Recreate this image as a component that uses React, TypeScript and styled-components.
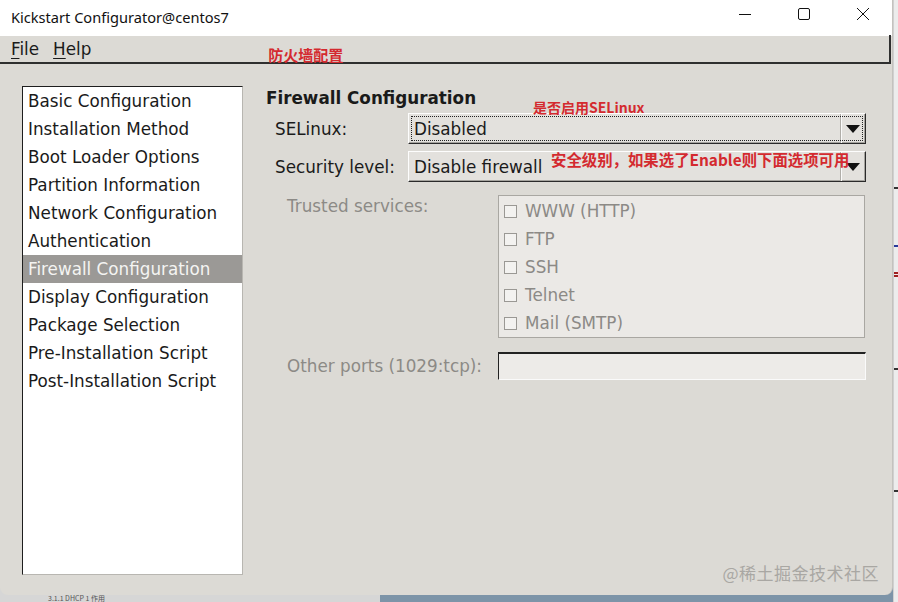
import React from "react"
import styled, { createGlobalStyle } from "styled-components"

const Color = {
    face: "#dcdad5",
    panel: "#ebe9e6",
    text: "#1a1a1a",
    muted: "#8c8a86",
    select: "#9b9996",
    note: "#d42a2f",
}

const sections = [
    "Basic Configuration",
    "Installation Method",
    "Boot Loader Options",
    "Partition Information",
    "Network Configuration",
    "Authentication",
    "Firewall Configuration",
    "Display Configuration",
    "Package Selection",
    "Pre-Installation Script",
    "Post-Installation Script",
]

const services = ["WWW (HTTP)", "FTP", "SSH", "Telnet", "Mail (SMTP)"]

const App: React.FC = () => (
    <>
        <GlobalStyle />
        <Desktop>
            <Window>
                <TitleBar>
                    <TitleText>Kickstart Configurator@centos7</TitleText>
                    <Controls>
                        <CtrlButton>
                            <svg width="14" height="14" viewBox="0 0 14 14">
                                <path d="M1 7.5h12" stroke="#111" strokeWidth="1" />
                            </svg>
                        </CtrlButton>
                        <CtrlButton>
                            <svg width="14" height="14" viewBox="0 0 14 14">
                                <rect x="1.5" y="1.5" width="11" height="11" rx="1.5" fill="none" stroke="#111" strokeWidth="1" />
                            </svg>
                        </CtrlButton>
                        <CtrlButton>
                            <svg width="14" height="14" viewBox="0 0 14 14">
                                <path d="M1 1l12 12M13 1L1 13" stroke="#111" strokeWidth="1" />
                            </svg>
                        </CtrlButton>
                    </Controls>
                </TitleBar>
                <MenuBar>
                    <MenuItem><u>F</u>ile</MenuItem>
                    <MenuItem><u>H</u>elp</MenuItem>
                    <Note $size={15}>防火墙配置</Note>
                </MenuBar>
                <Body>
                    <SectionList>
                        {sections.map((s) => (
                            <SectionItem key={s} $active={s === "Firewall Configuration"}>
                                {s}
                            </SectionItem>
                        ))}
                    </SectionList>
                    <Panel>
                        <Heading>Firewall Configuration</Heading>
                        <NoteLine $indent={267}>
                            <Note $size={14}>是否启用SELinux</Note>
                        </NoteLine>
                        <FormRow $top={4}>
                            <Label>SELinux:</Label>
                            <Combo $focused>
                                <ComboText>Disabled</ComboText>
                                <ComboArrow>
                                    <Triangle />
                                </ComboArrow>
                            </Combo>
                        </FormRow>
                        <FormRow $top={7}>
                            <Label>Security level:</Label>
                            <Combo>
                                <ComboText>Disable firewall</ComboText>
                                <ComboNote>安全级别，如果选了Enable则下面选项可用</ComboNote>
                                <ComboArrow>
                                    <Triangle />
                                </ComboArrow>
                            </Combo>
                        </FormRow>
                        <WideRow $top={13}>
                            <DimLabel $top>Trusted services:</DimLabel>
                            <ServiceBox>
                                {services.map((s) => (
                                    <ServiceItem key={s}>
                                        <CheckBox />
                                        {s}
                                    </ServiceItem>
                                ))}
                            </ServiceBox>
                        </WideRow>
                        <WideRow $top={14}>
                            <DimLabel>Other ports (1029:tcp):</DimLabel>
                            <Entry />
                        </WideRow>
                    </Panel>
                    <Watermark>@稀土掘金技术社区</Watermark>
                </Body>
            </Window>
            <SideStrip>
                <StripLine $top={187} $color="#333" />
                <StripLine $top={245} $color="#2a3a9a" />
                <StripLine $top={272} $color="#a02020" />
                <StripLine $top={275} $color="#a02020" />
                <StripLine $top={368} $color="#333" />
                <StripLine $top={490} $color="#333" />
            </SideStrip>
            <BottomStrip>
                <BottomLeft>3.1.1 DHCP 1 作用</BottomLeft>
                <BottomRight />
            </BottomStrip>
        </Desktop>
    </>
)

export default App

const GlobalStyle = createGlobalStyle`
    html, body {
        margin: 0;
        padding: 0;
        background: #e6e6e6;
    }
    body {
        font-family: "DejaVu Sans", sans-serif;
        overflow: hidden;
    }
`

const Desktop = styled.div`
    width: 898px;
    height: 602px;
    display: grid;
    grid-template-columns: 893px 5px;
    grid-template-rows: 595px 7px;
    background: #e8e8e8;
    overflow: hidden;
`

const Window = styled.div`
    grid-column: 1;
    grid-row: 1;
    display: flex;
    flex-direction: column;
    background: ${Color.face};
    border-radius: 0 0 8px 8px;
    border-right: 1px solid #c4c2be;
    overflow: hidden;
    position: relative;
    z-index: 1;
`

const TitleBar = styled.div`
    height: 36px;
    flex: none;
    background: #fff;
    display: flex;
    align-items: center;
    justify-content: space-between;
    padding-left: 11px;
`

const TitleText = styled.div`
    font-family: "Noto Sans", sans-serif;
    font-size: 14.6px;
    color: #111;
    margin-top: -3px;
`

const Controls = styled.div`
    display: flex;
    height: 100%;
`

const CtrlButton = styled.div`
    width: 59px;
    height: 100%;
    display: flex;
    align-items: center;
    justify-content: center;
    margin-top: -4px;
`

const MenuBar = styled.div`
    height: 26px;
    flex: none;
    display: flex;
    align-items: center;
    padding-left: 11px;
    padding-top: 1px;
    box-sizing: content-box;
    border-bottom: 2px solid #2f2f2f;
    border-right: 2px solid #2f2f2f;
    margin-right: 1px;
    margin-top: -1px;
`

const MenuItem = styled.span`
    font-size: 16.8px;
    color: ${Color.text};
    margin-right: 14px;
    u {
        text-underline-offset: 3px;
    }
`

const Note = styled.span<{ $size: number }>`
    font-family: "Noto Sans CJK SC", sans-serif;
    font-weight: 700;
    font-size: ${(p) => p.$size}px;
    color: ${Color.note};
    white-space: nowrap;
    ${MenuBar} & {
        margin-left: 163px;
        margin-top: 10px;
    }
`

const Body = styled.div`
    flex: 1;
    display: flex;
    gap: 23px;
    padding: 22px 0 20px 22px;
    position: relative;
`

const SectionList = styled.div`
    width: 219px;
    flex: none;
    background: #fff;
    border-top: 1px solid #1e1e1e;
    border-left: 1px solid #1e1e1e;
    border-right: 1px solid #b8b6b1;
    border-bottom: 1px solid #b8b6b1;
`

const SectionItem = styled.div<{ $active?: boolean }>`
    height: 28px;
    line-height: 28px;
    padding-left: 5px;
    font-size: 16.8px;
    white-space: nowrap;
    color: ${(p) => (p.$active ? "#f4f4f2" : Color.text)};
    background: ${(p) => (p.$active ? Color.select : "transparent")};
`

const Panel = styled.div`
    width: 600px;
    display: flex;
    flex-direction: column;
`

const Heading = styled.div`
    font-weight: 700;
    font-size: 16.8px;
    line-height: 22px;
    margin-top: 1px;
    color: ${Color.text};
`

const NoteLine = styled.div<{ $indent: number }>`
    height: 0;
    position: relative;
    z-index: 2;
    ${Note} {
        position: absolute;
        left: ${(p) => p.$indent}px;
        top: -12px;
        line-height: 20px;
    }
`

const FormRow = styled.div<{ $top: number }>`
    display: grid;
    grid-template-columns: 133px 458px;
    align-items: center;
    padding-left: 9px;
    margin-top: ${(p) => p.$top}px;
`

const Label = styled.div`
    font-size: 16.8px;
    color: ${Color.text};
`

const Combo = styled.div<{ $focused?: boolean }>`
    height: 31px;
    box-sizing: border-box;
    position: relative;
    display: flex;
    align-items: center;
    background: #e3e1dd;
    border-top: 1px solid #fdfdfd;
    border-left: 1px solid #fdfdfd;
    border-right: 1px solid #2a2a2a;
    border-bottom: 1px solid #2a2a2a;
    box-shadow: inset -1px -1px 0 #a5a39e;
    &::after {
        content: "";
        display: ${(p) => (p.$focused ? "block" : "none")};
        position: absolute;
        inset: 2px 2px 2px 2px;
        border: 1px dotted #222;
        pointer-events: none;
    }
`

const ComboText = styled.div`
    flex: 1;
    padding-left: 5px;
    font-size: 16.8px;
    color: ${Color.text};
    white-space: nowrap;
`

const ComboNote = styled(Note).attrs({ $size: 15.4 })`
    position: absolute;
    left: 142px;
    top: -2px;
    line-height: 18px;
`

const ComboArrow = styled.div`
    width: 22px;
    height: 100%;
    display: flex;
    align-items: center;
    justify-content: center;
    border-left: 1px solid #fbfbfb;
    box-shadow: -1px 0 0 #b0aea9;
    margin: 0 1px;
    flex: none;
`

const Triangle = styled.div`
    width: 0;
    height: 0;
    border-left: 7px solid transparent;
    border-right: 7px solid transparent;
    border-top: 8px solid #111;
`

const WideRow = styled.div<{ $top: number }>`
    display: grid;
    grid-template-columns: 211px 1fr;
    align-items: center;
    padding-left: 21px;
    margin-top: ${(p) => p.$top}px;
`

const DimLabel = styled.div<{ $top?: boolean }>`
    font-size: 16.8px;
    color: ${Color.muted};
    align-self: ${(p) => (p.$top ? "start" : "center")};
    margin-top: ${(p) => (p.$top ? "1px" : "0")};
    line-height: 20px;
`

const ServiceBox = styled.div`
    background: ${Color.panel};
    border: 1px solid #a9a7a2;
    padding: 1px 0 0;
    height: 140px;
    width: 365px;
`

const ServiceItem = styled.div`
    height: 28px;
    display: flex;
    align-items: center;
    padding-left: 5px;
    font-size: 16.8px;
    color: ${Color.muted};
`

const CheckBox = styled.span`
    width: 11px;
    height: 11px;
    border: 1px solid #9a9894;
    background: #f3f2f0;
    margin-right: 8px;
    flex: none;
`

const Entry = styled.div`
    height: 28px;
    width: 368px;
    box-sizing: border-box;
    background: #edebe8;
    border-top: 2px solid #222;
    border-left: 1px solid #222;
    border-right: 1px solid #fafafa;
    border-bottom: 1px solid #fafafa;
`

const Watermark = styled.div`
    position: absolute;
    right: 13px;
    bottom: 10px;
    font-family: "Noto Sans CJK SC", sans-serif;
    font-size: 17px;
    color: #a9a7a3;
    letter-spacing: 0.5px;
`

const SideStrip = styled.div`
    grid-column: 2;
    grid-row: 1 / span 2;
    background: #ececec;
    border-left: 1px solid #d0d0d0;
    position: relative;
`

const StripLine = styled.div<{ $top: number; $color: string }>`
    position: absolute;
    left: 0;
    right: 0;
    top: ${(p) => p.$top}px;
    height: 2px;
    background: ${(p) => p.$color};
`

const BottomStrip = styled.div`
    grid-column: 1;
    grid-row: 2;
    display: flex;
    margin-top: -8px;
`

const BottomLeft = styled.div`
    width: 380px;
    background: #d6d6d6;
    font-family: "Noto Sans CJK SC", sans-serif;
    font-size: 7px;
    line-height: 7px;
    padding-top: 8px;
    padding-left: 48px;
    color: #555;
    overflow: hidden;
    white-space: nowrap;
    box-sizing: border-box;
`

const BottomRight = styled.div`
    flex: 1;
    background: #7d94a8;
`
